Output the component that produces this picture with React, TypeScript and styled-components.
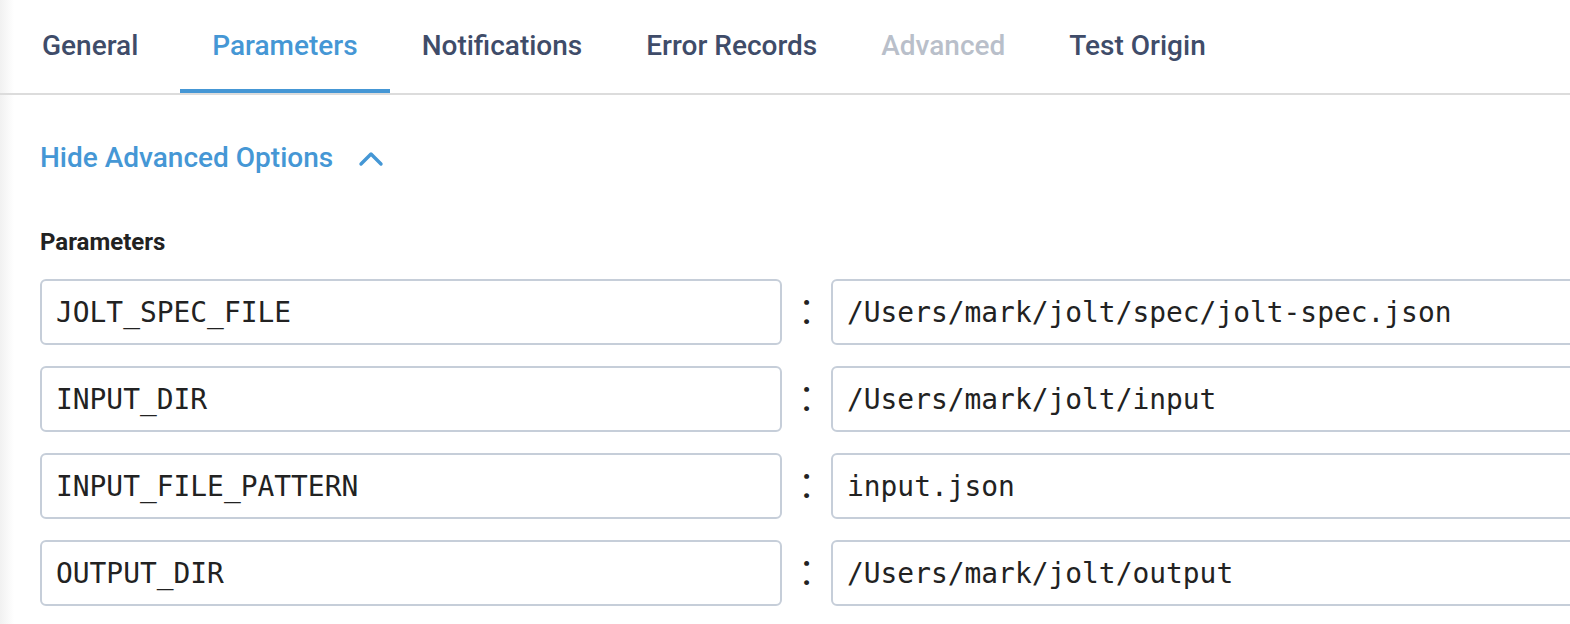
import styled, { createGlobalStyle } from "styled-components";

const GlobalStyle = createGlobalStyle`
  html, body {
    margin: 0;
    padding: 0;
    background: #ffffff;
  }
  body {
    font-family: Roboto, "Liberation Sans", sans-serif;
  }
`;

const Page = styled.div`
  width: 1570px;
  height: 624px;
  overflow: hidden;
  background: linear-gradient(to right, #f1f1f1 0px, #ffffff 14px);
`;

const TabBar = styled.nav`
  display: flex;
  height: 93px;
  padding-left: 10px;
  border-bottom: 2px solid #dcdcdc;
`;

const Tab = styled.div<{ $active?: boolean; $disabled?: boolean }>`
  display: flex;
  align-items: center;
  padding: 2px 32px 0;
  font-size: 28px;
  font-weight: 500;
  color: ${(p) => (p.$active ? "#4597d5" : p.$disabled ? "#b9bfca" : "#3f4c69")};
  border-bottom: 4px solid ${(p) => (p.$active ? "#4597d5" : "transparent")};
  cursor: ${(p) => (p.$disabled ? "default" : "pointer")};

  &:first-child {
    margin-right: 10px;
  }
`;

const Content = styled.section`
  padding: 46px 0 0 40px;
`;

const Toggle = styled.button`
  display: flex;
  align-items: center;
  gap: 25px;
  padding: 0;
  border: none;
  background: none;
  font-family: inherit;
  font-size: 28px;
  font-weight: 500;
  color: #4597d5;
  cursor: pointer;
`;

const SectionLabel = styled.h3`
  margin: 54px 0 23px;
  font-size: 24px;
  font-weight: 700;
  color: #222222;
`;

const ParamList = styled.div`
  display: flex;
  flex-direction: column;
  gap: 21px;
`;

const ParamRow = styled.div`
  display: flex;
  align-items: center;
`;

const Field = styled.div<{ $wide?: boolean }>`
  box-sizing: border-box;
  display: flex;
  align-items: center;
  height: 66px;
  width: ${(p) => (p.$wide ? "760px" : "742px")};
  flex-shrink: 0;
  padding: 0 14px;
  border: 2px solid #c6ced9;
  border-radius: 6px;
  background: #ffffff;
  font-family: "DejaVu Sans Mono", "Liberation Mono", monospace;
  font-size: 27.9px;
  line-height: normal;
  color: #222222;
  white-space: pre;
`;

const Colon = styled.span`
  flex-shrink: 0;
  width: 49px;
  padding-bottom: 6px;
  text-align: center;
  font-family: Roboto, sans-serif;
  font-size: 44px;
  font-weight: 400;
  line-height: 1;
  color: #222222;
`;

const tabs = [
  { name: "General" },
  { name: "Parameters", active: true },
  { name: "Notifications" },
  { name: "Error Records" },
  { name: "Advanced", disabled: true },
  { name: "Test Origin" },
];

const params = [
  { key: "JOLT_SPEC_FILE", value: "/Users/mark/jolt/spec/jolt-spec.json" },
  { key: "INPUT_DIR", value: "/Users/mark/jolt/input" },
  { key: "INPUT_FILE_PATTERN", value: "input.json" },
  { key: "OUTPUT_DIR", value: "/Users/mark/jolt/output" },
];

const ChevronUp = () => (
  <svg width="26" height="18" viewBox="0 0 26 18" fill="none">
    <path
      d="M3 15 L13 5 L23 15"
      stroke="#4597d5"
      strokeWidth="3.4"
      strokeLinecap="round"
      strokeLinejoin="round"
    />
  </svg>
);

export default function App() {
  return (
    <>
      <GlobalStyle />
      <Page>
        <TabBar>
          {tabs.map((t) => (
            <Tab key={t.name} $active={t.active} $disabled={t.disabled}>
              {t.name}
            </Tab>
          ))}
        </TabBar>
        <Content>
          <Toggle>
            Hide Advanced Options
            <ChevronUp />
          </Toggle>
          <SectionLabel>Parameters</SectionLabel>
          <ParamList>
            {params.map((p) => (
              <ParamRow key={p.key}>
                <Field>{p.key}</Field>
                <Colon>:</Colon>
                <Field $wide>{p.value}</Field>
              </ParamRow>
            ))}
          </ParamList>
        </Content>
      </Page>
    </>
  );
}
